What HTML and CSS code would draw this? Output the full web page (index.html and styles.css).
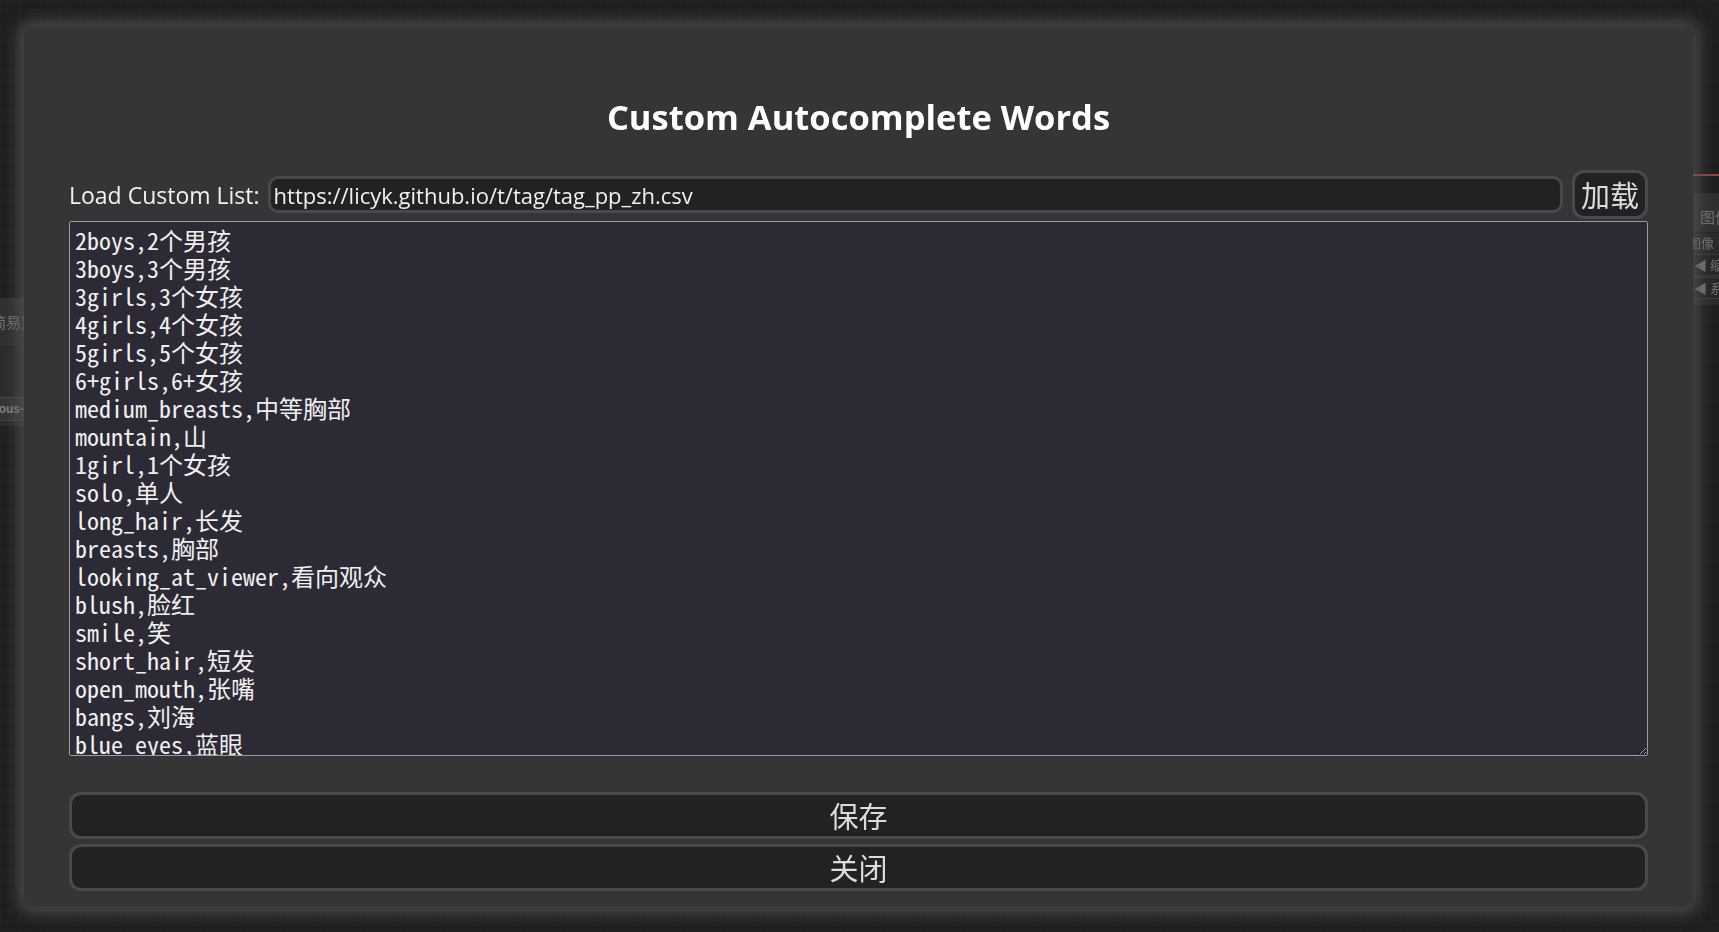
FILE: index.html
```html
<!DOCTYPE html>
<html lang="zh">
<head>
<meta charset="utf-8">
<title>Custom Autocomplete Words</title>
<link rel="stylesheet" href="styles.css">
</head>
<body>
<div class="canvas">
  <div class="node node-left">
    <div class="node-title-left">(简易)</div>
    <div class="node-slot-left">Various-</div>
  </div>
  <div class="link-red"></div>
  <div class="node node-right">
    <div class="node-head">图像</div>
    <div class="node-row">图像</div>
    <div class="node-row widget">◀ 缩放</div>
    <div class="node-row widget">◀ 系数</div>
  </div>
</div>
<div class="backdrop">
  <div class="dialog">
    <h1 class="dialog-title">Custom Autocomplete Words</h1>
    <div class="load-row">
      <label class="load-label" for="url">Load Custom List:</label>
      <input id="url" class="load-input" type="text" value="https://licyk.github.io/t/tag/tag_pp_zh.csv">
      <button class="btn load-btn">加载</button>
    </div>
    <textarea class="words" spellcheck="false">2boys,2个男孩
3boys,3个男孩
3girls,3个女孩
4girls,4个女孩
5girls,5个女孩
6+girls,6+女孩
medium_breasts,中等胸部
mountain,山
1girl,1个女孩
solo,单人
long_hair,长发
breasts,胸部
looking_at_viewer,看向观众
blush,脸红
smile,笑
short_hair,短发
open_mouth,张嘴
bangs,刘海
blue_eyes,蓝眼
blonde_hair,金发
brown_hair,棕发
skirt,裙子
black_hair,黑发
hat,帽子</textarea>
    <button class="btn wide-btn">保存</button>
    <button class="btn wide-btn">关闭</button>
  </div>
</div>
</body>
</html>
```
FILE: styles.css
```css
html, body {
  margin: 0;
  padding: 0;
  width: 100%;
  height: 100%;
  overflow: hidden;
}
body {
  background-color: #242424;
  background-image:
    linear-gradient(rgba(255,255,255,0.025) 1px, transparent 1px),
    linear-gradient(90deg, rgba(255,255,255,0.025) 1px, transparent 1px);
  background-size: 10px 10px;
  font-family: "Open Sans", "Noto Sans", "Noto Sans CJK SC", sans-serif;
}

/* background canvas nodes (dimmed, mostly hidden behind dialog) */
.canvas {
  position: fixed;
  inset: 0;
}
.node {
  position: absolute;
  background: #3a3a3a;
  color: #9a9a9a;
  font-size: 13px;
  font-family: "Noto Sans CJK SC", "Noto Sans", sans-serif;
}
.node-left {
  left: -200px;
  top: 298px;
  width: 230px;
  height: 128px;
  background: #363636;
}
.node-title-left {
  height: 48px;
  line-height: 48px;
  text-align: right;
  padding-right: 4px;
  font-size: 15px;
  background: #3d3d3d;
  border-bottom: 1px solid #2e2e2e;
}
.node-slot-left {
  margin-top: 50px;
  height: 22px;
  line-height: 22px;
  text-align: right;
  padding-right: 6px;
  font-weight: bold;
  color: #b0b0b0;
  background: #444444;
  border-top: 1px solid #5a5a5a;
  border-bottom: 1px solid #5a5a5a;
  font-family: "Liberation Sans", sans-serif;
  font-size: 12px;
}
.link-red {
  position: absolute;
  left: 1690px;
  top: 174px;
  width: 40px;
  height: 2px;
  background: #d05858;
}
.node-right {
  left: 1694px;
  top: 193px;
  width: 200px;
  height: 112px;
  background: #353535;
}
.node-head {
  height: 35px;
  padding-top: 4px;
  line-height: 39px;
  padding-left: 6px;
  font-size: 15px;
  background: #3c3c3c;
  border-bottom: 1px solid #2c2c2c;
}
.node-row {
  height: 20px;
  line-height: 20px;
  margin-left: -6px;
  font-size: 13px;
}
.node-right .widget {
  margin: 1px 0 0 0;
  padding-left: 0;
  background: #2f2f2f;
  border-top: 1px solid #4a4a4a;
  border-bottom: 1px solid #4a4a4a;
}

/* modal */
.backdrop {
  position: fixed;
  inset: 0;
  display: flex;
  padding: 27px 26px 25px 24px;
  background: rgba(20, 20, 20, 0.3);
}
.dialog {
  flex: 1;
  display: flex;
  flex-direction: column;
  background: #353535;
  border-radius: 8px;
  padding: 70px 45px 16px;
  box-shadow: 0 0 16px 6px rgba(88, 88, 88, 0.75);
}
.dialog-title {
  margin: 0;
  height: 40px;
  line-height: 40px;
  text-align: center;
  font-size: 34.5px;
  font-weight: 700;
  color: #ffffff;
  font-family: "Open Sans", "Noto Sans", sans-serif;
}
.load-row {
  display: flex;
  align-items: center;
  gap: 8px;
  height: 49px;
  margin-top: 33px;
}
.load-label {
  font-size: 23px;
  color: #f2f2f2;
  white-space: nowrap;
  font-family: "Open Sans", "Noto Sans", sans-serif;
}
.load-input {
  flex: 1;
  height: 37px;
  box-sizing: border-box;
  margin: 0 1px 0 0;
  padding: 0 3px;
  background: #222222;
  border: 3px solid #494949;
  border-radius: 10px;
  color: #f0f0f0;
  font-size: 22px;
  font-family: "Open Sans", "Noto Sans", sans-serif;
  outline: none;
}
.btn {
  box-sizing: border-box;
  background: #222222;
  border: 3px solid #4a4a4a;
  border-radius: 12px;
  color: #dcdcdc;
  font-size: 29px;
  font-family: "Noto Sans CJK SC", sans-serif;
  padding: 0;
  cursor: pointer;
}
.load-btn {
  width: 76px;
  height: 49px;
  line-height: 1;
}
.words {
  margin-top: 2px;
  height: 535px;
  box-sizing: border-box;
  padding: 4px 5px;
  background: #2b2a35;
  border: 1px solid #9c9aa8;
  border-radius: 2px;
  color: #f0f0f0;
  font-size: 24px;
  line-height: 28px;
  font-family: "Noto Sans Mono CJK SC", "Liberation Mono", "Noto Sans CJK SC", monospace;
  resize: vertical;
  outline: none;
  scrollbar-width: none;
  overflow-y: auto;
}
.wide-btn {
  height: 47px;
  width: 100%;
  line-height: 1;
}
.words + .wide-btn {
  margin-top: 36px;
}
.wide-btn + .wide-btn {
  margin-top: 5px;
}
```
